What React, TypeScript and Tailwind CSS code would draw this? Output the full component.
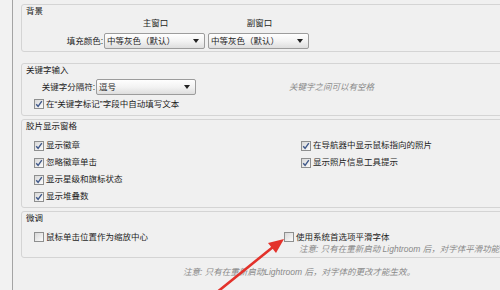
import type { ReactNode } from 'react'

const font = { fontFamily: '"Liberation Sans", "Noto Sans CJK SC", sans-serif' }

function Check({ on }: { on?: boolean }) {
  return (
    <span className="w-[10px] h-[10px] shrink-0 border border-[#8e8f8f] bg-linear-to-br from-[#d8d8d8] to-[#fbfbfb] flex items-center justify-center">
      {on && (
        <svg width="8" height="8" viewBox="0 0 8 8">
          <path d="M1.2 4.3 L3.1 6.3 L6.8 1.2" fill="none" stroke="#40598a" strokeWidth="1.4" />
        </svg>
      )}
    </span>
  )
}

function CheckRow({ on, children, className = 'h-[17px]' }: { on?: boolean; children: ReactNode; className?: string }) {
  return (
    <div className={`flex items-center gap-[2px] ${className}`}>
      <Check on={on} />
      <span className="whitespace-nowrap">{children}</span>
    </div>
  )
}

function Select({ value, className }: { value: string; className: string }) {
  return (
    <div className={`h-[16px] shrink-0 flex items-center justify-between border border-[#9c9c9c] rounded-[2px] bg-linear-to-b from-[#fefefe] via-[#f3f3f3] to-[#dedede] pl-[2px] pr-[5px] ${className}`}>
      <span className="whitespace-nowrap">{value}</span>
      <svg width="6" height="4" viewBox="0 0 6 4">
        <path d="M0 0 H6 L3 4 Z" fill="#222" />
      </svg>
    </div>
  )
}

function Group({ title, className, children }: { title: string; className: string; children: ReactNode }) {
  return (
    <div className={`w-[540px] shrink-0 border border-[#d4d4d4] rounded-[3px] flex flex-col ${className}`}>
      <div className="h-[12px] flex items-center pl-[4px] text-[#222]">{title}</div>
      {children}
    </div>
  )
}

export default function App() {
  return (
    <div className="relative w-[500px] h-[290px] overflow-hidden bg-[#f0f0f0] flex text-[8.5px] text-[#1e1e1e] leading-none" style={font}>
      <div className="w-[13px] shrink-0 border-r border-[#a4a4a4] bg-[#f2f2f2]" />
      <div className="flex-1 flex flex-col pl-[8px] pt-[4px]">
        <Group title="背景" className="h-[48px]">
          <div className="h-[12px] flex items-center">
            <div className="w-[83px] shrink-0" />
            <div className="w-[101px] shrink-0 text-center">主窗口</div>
            <div className="w-[3px] shrink-0" />
            <div className="w-[101px] shrink-0 text-center">副窗口</div>
          </div>
          <div className="mt-[4px] flex items-center">
            <div className="w-[82px] shrink-0 text-right pr-[1px]">填充颜色:</div>
            <Select value="中等灰色（默认）" className="w-[101px]" />
            <div className="w-[3px] shrink-0" />
            <Select value="中等灰色（默认）" className="w-[101px]" />
          </div>
        </Group>

        <Group title="关键字输入" className="mt-[11px] h-[53px]">
          <div className="mt-[3px] flex items-center">
            <div className="w-[74px] shrink-0 text-right pr-[1px]">关键字分隔符:</div>
            <Select value="逗号" className="w-[100px]" />
            <div className="ml-[93px] italic text-[#8a8a8a] whitespace-nowrap">关键字之间可以有空格</div>
          </div>
          <div className="pl-[12px] mt-[3px]">
            <CheckRow on className="h-[12px]">在“关键字标记”字段中自动填写文本</CheckRow>
          </div>
        </Group>

        <Group title="胶片显示窗格" className="mt-[3px] h-[89px]">
          <div className="h-[2px]" />
          <div className="flex pl-[12px] mt-[3px]">
            <div className="w-[267px] shrink-0 flex flex-col">
              <CheckRow on>显示徽章</CheckRow>
              <CheckRow on>忽略徽章单击</CheckRow>
              <CheckRow on>显示星级和旗标状态</CheckRow>
              <CheckRow on>显示堆叠数</CheckRow>
            </div>
            <div className="flex flex-col">
              <CheckRow on>在导航器中显示鼠标指向的照片</CheckRow>
              <CheckRow on>显示照片信息工具提示</CheckRow>
            </div>
          </div>
        </Group>

        <Group title="微调" className="mt-[3px] h-[47px]">
          <div className="h-[2px]" />
          <div className="flex pl-[12px] mt-[5px]">
            <div className="w-[250px] shrink-0">
              <CheckRow className="h-[12px]">鼠标单击位置作为缩放中心</CheckRow>
            </div>
            <div className="flex flex-col">
              <CheckRow className="h-[12px]">使用系统首选项平滑字体</CheckRow>
              <div className="h-[12px] flex items-center pl-[15px] italic text-[#8a8a8a] whitespace-nowrap">
                注意: 只有在重新启动 Lightroom 后，对字体平滑功能的更改才能生效。
              </div>
            </div>
          </div>
        </Group>

        <div className="mt-[8px] h-[12px] flex items-center pl-[162px] italic text-[#8a8a8a] whitespace-nowrap">
          注意: 只有在重新启动Lightroom 后，对字体的更改才能生效。
        </div>
      </div>

      <svg className="absolute left-0 top-0 pointer-events-none" width="500" height="290" viewBox="0 0 500 290">
        <path d="M216 293 L273 247" stroke="#e3322b" strokeWidth="2.6" strokeLinecap="round" />
        <path d="M284 239 L268 243 L276 253 Z" fill="#e3322b" />
      </svg>
    </div>
  )
}
